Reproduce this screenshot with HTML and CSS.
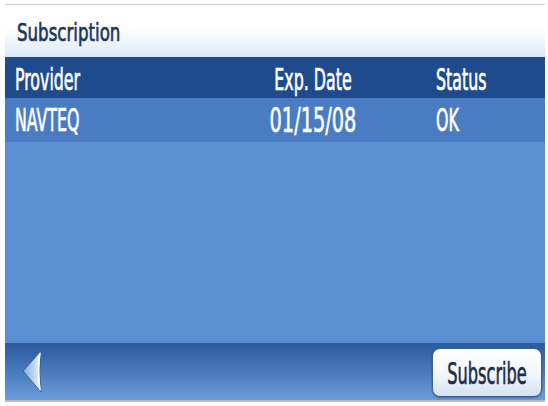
FILE: index.html
```html
<!DOCTYPE html>
<html lang="en">
<head>
    <meta charset="UTF-8">
    <title>Subscription</title>
    <link rel="stylesheet" href="styles.css">
</head>
<body>
    <div class="screen">
        <div class="title"><span>Subscription</span></div>

        <div class="row head">
            <div class="cell"><span class="tall">Provider</span></div>
            <div class="cell mid"><span class="tall">Exp. Date</span></div>
            <div class="cell last"><span class="tall">Status</span></div>
        </div>

        <div class="row sel">
            <div class="cell"><span class="tall">NAVTEQ</span></div>
            <div class="cell mid"><span class="tall date">01/15/08</span></div>
            <div class="cell last"><span class="tall">OK</span></div>
        </div>

        <div class="list"></div>

        <div class="bottom">
            <div class="back">
                <svg width="24" height="46" viewBox="0 0 24 46">
                    <defs>
                        <linearGradient id="arr" x1="0" y1="0" x2="1" y2="0">
                            <stop offset="0" stop-color="#7fa8dc"/>
                            <stop offset="0.7" stop-color="#c9def4"/>
                            <stop offset="1" stop-color="#ffffff"/>
                        </linearGradient>
                    </defs>
                    <path d="M2 22 L20 2 Q17 22 20 43 Z" fill="url(#arr)" stroke="#2d5690" stroke-width="0.8" stroke-linejoin="round"/>
                    <path d="M19 4 Q16.5 22 19 41" fill="none" stroke="#ffffff" stroke-width="1.4"/>
                </svg>
            </div>
            <button class="btn"><span class="tall">Subscribe</span></button>
        </div>
    </div>
</body>
</html>
```

FILE: styles.css
```css
body {
    margin: 0;
    background: #ffffff;
    font-family: "DejaVu Sans Condensed", "DejaVu Sans", sans-serif;
    font-stretch: condensed;
}
.screen {
    width: 540px;
    margin: 4px 0 0 5px;
    border-top: 1px solid #c8ccd2;
    border-bottom: 2px solid #b8bcc2;
    display: flex;
    flex-direction: column;
}
.title {
    height: 52px;
    display: flex;
    align-items: center;
    padding-left: 12px;
    background: linear-gradient(#ffffff 0%, #ffffff 45%, #dbe9f6 100%);
    color: #1c3560;
    font-size: 18.5px;
}
.title span {
    display: inline-block;
    transform: scaleY(1.3);
    margin-top: 3px;
    -webkit-text-stroke: 0.5px #1c3560;
}
.row {
    display: grid;
    grid-template-columns: 240px 116px 1fr;
    align-items: center;
    padding-left: 10px;
    color: #ffffff;
    font-size: 17.6px;
}
.head { height: 41px; background: #1f4b8c; }
.sel { height: 44px; background: #4a7cc3; }
.cell.mid { text-align: center; }
.cell.last { padding-left: 65px; }
.tall {
    display: inline-block;
    transform: scaleY(1.75);
    -webkit-text-stroke: 0.4px #ffffff;
}
.head .tall { margin-top: 3px; }
.sel .tall { transform: scaleY(1.85); margin-top: -2px; }
.sel .date { font-size: 21.5px; transform: scaleY(1.6); }
.list { height: 201px; background: #5a8fd3; }
.bottom {
    height: 57px;
    display: flex;
    align-items: center;
    justify-content: space-between;
    padding: 0 3px 0 16px;
    background: linear-gradient(#2c5a9c 0%, #4577b8 45%, #6c9edc 100%);
}
.back { display: flex; align-items: center; }
.btn {
    width: 110px;
    height: 49px;
    border: 1px solid #3a5f90;
    border-radius: 8px;
    background: linear-gradient(#ffffff 0%, #f4f8fc 50%, #d4e2f0 100%);
    box-shadow: 0 1px 2px rgba(0,0,0,0.35);
    color: #1e2e48;
    font-family: inherit;
    font-stretch: condensed;
    font-size: 18px;
    padding: 0;
    margin-top: 2px;
}
.btn .tall { transform: scaleY(1.7); -webkit-text-stroke: 0.4px #1e2e48; }
```
